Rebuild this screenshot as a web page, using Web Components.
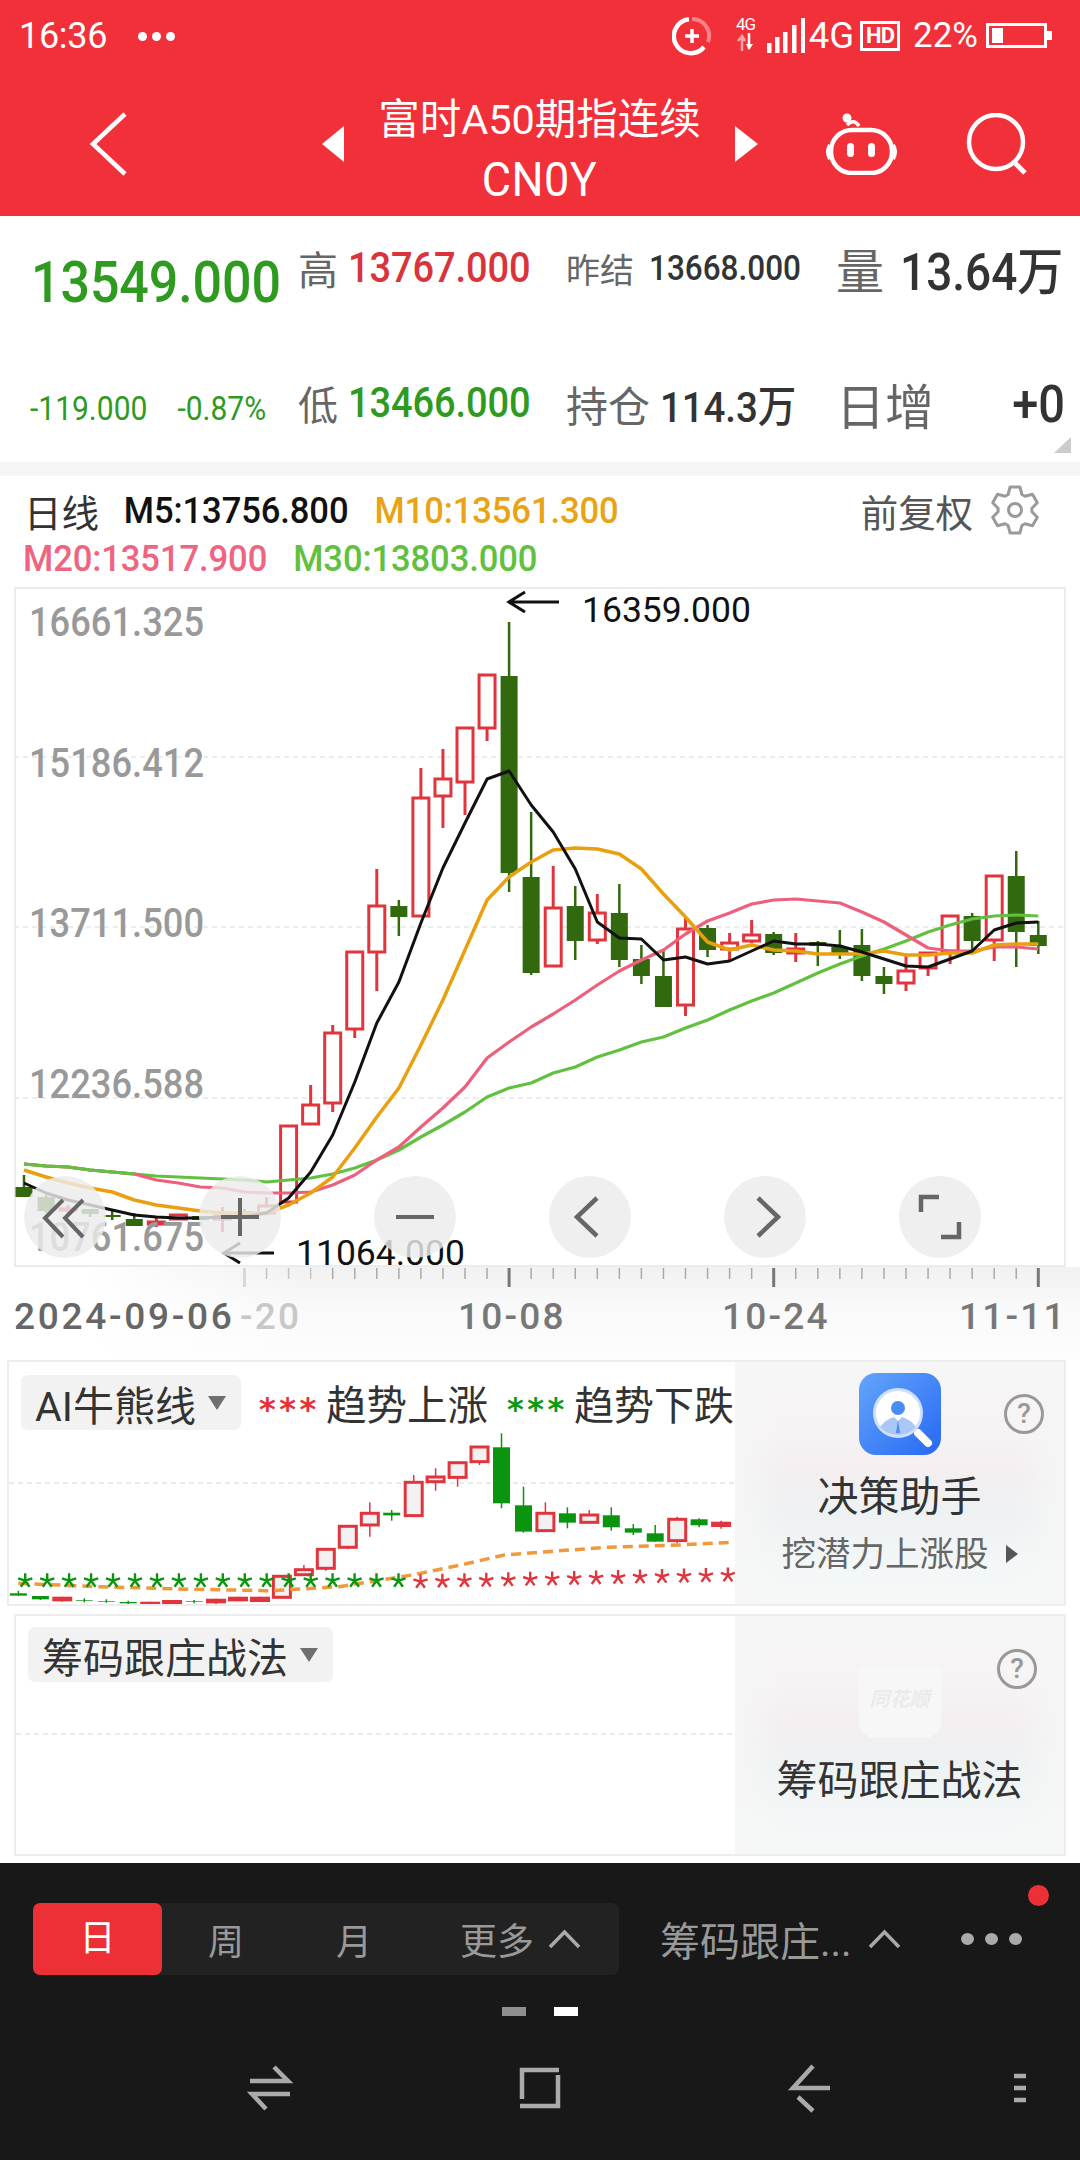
<!DOCTYPE html>
<html lang="zh">
<head>
<meta charset="utf-8">
<title>CN0Y</title>
<style>
  html, body { margin: 0; padding: 0; background: #fff; }
  body { font-family: Roboto, "Noto Sans CJK SC", sans-serif; width: 1080px; height: 2160px; overflow: hidden; }
  app-shell { width: 1080px; }
</style>
</head>
<body>
<app-shell>
  <status-bar></status-bar>
  <nav-header></nav-header>
  <quote-summary></quote-summary>
  <kline-legend></kline-legend>
  <kline-chart></kline-chart>
  <date-axis></date-axis>
  <signal-panel label="AI牛熊线" legend style="--panel-left:7px; --chip-left:12px;">
    <mini-kline slot="chart"></mini-kline>
    <advisor-card slot="side" title="决策助手" sub="挖潜力上涨股" style="--pad-top:11px; --help-right:20px; --help-top:32px; --icon-h:82px; --title-gap:14px;">
      <svg slot="icon" width="82" height="82" viewBox="0 0 82 82">
        <defs>
          <linearGradient id="blue" x1="0" y1="0" x2="1" y2="1">
            <stop offset="0" stop-color="#64a5fb"/><stop offset="1" stop-color="#2768f4"/>
          </linearGradient>
        </defs>
        <rect width="82" height="82" rx="17" fill="url(#blue)"/>
        <path d="M59 60 L69 70" stroke="#fff" stroke-width="8" stroke-linecap="round"/>
        <circle cx="39" cy="40" r="23.5" fill="#fff" stroke="#cfe0fa" stroke-width="3"/>
        <circle cx="39" cy="35" r="7" fill="#4a8cf5"/>
        <path d="M21 54 Q27 46 35 44 L39 48 L43 44 Q51 46 57 54 Q49 62 39 62 Q29 62 21 54Z" fill="#a9c8f5"/>
        <path d="M39 47 L41 60 H37Z" fill="#4a8cf5"/>
      </svg>
    </advisor-card>
  </signal-panel>
  <signal-panel label="筹码跟庄战法" style="--panel-left:14px; --chip-left:12px; --panel-gap:8px; --panel-h:242px; --chip-pad:15px;">
    <svg slot="chart" width="721" height="238" viewBox="16 1616 721 238">
      <line x1="16" x2="737" y1="1734" y2="1734" stroke="#e4e4e4" stroke-width="1.5" stroke-dasharray="5 4"/>
    </svg>
    <advisor-card slot="side" title="筹码跟庄战法" style="--pad-top:51px; --help-right:27px; --help-top:33px; --icon-h:71px; --title-gap:15px;">
      <ghost-logo slot="icon">同花顺</ghost-logo>
    </advisor-card>
  </signal-panel>
  <period-bar></period-bar>
</app-shell>

<script>
// small helper, every element just sets its shadow html
const mount = (el, html) => {
    el.attachShadow({mode: 'open'}).innerHTML = html;
};

const FONT = 'Roboto, "Noto Sans CJK SC", sans-serif';
const RED = '#e0353c';
const DARK_GREEN = '#32690f';
const BAR_RED = '#f2303a';

class AppShell extends HTMLElement {
    constructor(){
        super();
        mount(this, `<style>:host{display:flex;flex-direction:column;width:1080px;height:2160px;font-family:${FONT};}</style><slot></slot>`);
    }
}

class StatusBar extends HTMLElement {
    constructor(){
        super();
        mount(this, `
        <style>
          :host { display:flex; align-items:center; height:60px; padding:12px 28px 0 19px; box-sizing:border-box; background:${BAR_RED}; color:#fff; margin-bottom:0; }
          .time { font-size:36px; line-height:48px; letter-spacing:-.3px; }
          .dots { display:flex; gap:5px; margin-left:31px; }
          .dots i { width:9px; height:9px; border-radius:50%; background:#fff; }
          .right { margin-left:auto; display:flex; align-items:center; }
          .four { font-size:36.5px; line-height:40px; margin-left:4px; }
          .pct { font-size:35px; line-height:40px; margin-left:13px; }
          svg { display:block; }
          .hd { width:40px; height:30px; margin-left:6px; box-sizing:border-box; border:3px solid #fff; font-size:22px; line-height:23px; font-weight:700; text-align:center; letter-spacing:-1px; }
          .small { margin-left:23px; width:22px; height:40px; display:flex; flex-direction:column; align-items:center; }
          .small b { font-size:17px; line-height:16px; font-weight:400; letter-spacing:-1px; }
        </style>
        <span class="time">16:36</span>
        <span class="dots"><i></i><i></i><i></i></span>
        <div class="right">
          <svg width="40" height="40" viewBox="0 0 40 40">
            <path d="M20 3 A17 17 0 0 1 36 26" fill="none" stroke="#fff" stroke-opacity=".4" stroke-width="4"/>
            <path d="M32 31 A17 17 0 1 1 17 3.3" fill="none" stroke="#fff" stroke-width="4.5"/>
            <path d="M20 13 V27 M13 20 H27" stroke="#fff" stroke-width="3.5"/>
          </svg>
          <div class="small"><b>4G</b>
            <svg width="18" height="20" viewBox="0 0 18 20"><path d="M5 19 V5 M1 9 L5 4 L8 9" fill="none" stroke="#fff" stroke-opacity=".55" stroke-width="2.5"/><path d="M12 1 V17" stroke="#fff" stroke-width="2.5"/><path d="M9 12 H16 L12 18Z" fill="#fff"/></svg>
          </div>
          <svg style="margin-left:10px" width="38" height="36" viewBox="767 18 38 36" fill="#fff">
            <rect x="767" y="43" width="4.5" height="10"/><rect x="775" y="37" width="4.5" height="16"/><rect x="783" y="32" width="4.5" height="21"/><rect x="792" y="25" width="4.5" height="28"/><rect x="801" y="18" width="4" height="35"/>
          </svg>
          <span class="four">4G</span>
          <span class="hd">HD</span>
          <span class="pct">22%</span>
          <svg style="margin-left:8px" width="66" height="26" viewBox="0 0 66 26">
            <rect x="1.5" y="1.5" width="58" height="22" fill="none" stroke="#fff" stroke-width="3"/>
            <rect x="6" y="5" width="11" height="15" fill="#fff"/>
            <rect x="61" y="8" width="5" height="9" fill="#fff"/>
          </svg>
        </div>`);
    }
}

class NavHeader extends HTMLElement {
    constructor(){
        super();
        mount(this, `
        <style>
          :host { display:flex; align-items:center; height:156px; padding:12px 0 0 88px; box-sizing:border-box; background:${BAR_RED}; color:#fff; }
          svg { display:block; flex:none; }
          .title { width:391px; flex:none; text-align:center; margin-top:12px; }
          .title div { font-size:41.5px; line-height:60px; white-space:nowrap; }
          .title div + div { font-size:45px; letter-spacing:.5px; transform:scaleY(1.08); }
        </style>
        <svg width="40" height="64" viewBox="0 0 40 64"><path d="M37 2 L5 32 L37 62" fill="none" stroke="#fff" stroke-width="4.5"/></svg>
        <svg style="margin-left:194px" width="22" height="36" viewBox="0 0 22 36"><path d="M22 0 V36 L0 18Z" fill="#fff"/></svg>
        <div class="title"><div>富时A50期指连续</div><div>CN0Y</div></div>
        <svg width="23" height="36" viewBox="0 0 23 36"><path d="M0 0 V36 L23 18Z" fill="#fff"/></svg>
        <svg style="margin-left:68px" width="71" height="62" viewBox="0 0 71 62">
          <path d="M20 8 Q27 1 32 9" transform="translate(1,4)" fill="none" stroke="#fff" stroke-width="3.5"/>
          <circle cx="21" cy="5" r="4.5" fill="#fff"/>
          <rect x="5" y="17" width="61" height="43" rx="21" fill="none" stroke="#fff" stroke-width="4.5"/>
          <path d="M4 32 Q0 38 4 46 M67 32 Q71 38 67 46" fill="none" stroke="#fff" stroke-width="4"/>
          <rect x="21" y="30" width="7" height="14" rx="3.5" fill="#fff"/>
          <rect x="42" y="30" width="7" height="14" rx="3.5" fill="#fff"/>
        </svg>
        <svg style="margin-left:69px" width="64" height="62" viewBox="0 0 64 62">
          <circle cx="30" cy="29" r="27" fill="none" stroke="#fff" stroke-width="4.5"/>
          <path d="M48 49 L59 60" stroke="#fff" stroke-width="5"/>
        </svg>`);
    }
}

class QuoteSummary extends HTMLElement {
    constructor(){
        super();
        mount(this, `
        <style>
          :host { display:grid; grid-template-columns:268px 268px 270px 1fr; grid-template-rows:80px 80px; row-gap:55px; padding:12px 15px 19px 30px; box-sizing:border-box; height:246px; background:#fff; position:relative; color:#333; }
          .cell { display:flex; align-items:center; white-space:nowrap; }
          .g { color:#2e9a1f; } .r { color:#d9343c; }
          .tall { transform:scaleY(1.11); }
          .price { font-size:52px; font-weight:500; margin:28px 0 0 1px; letter-spacing:-.1px; }
          .chg { font-size:30px; margin-top:10px; }
          .lbl { color:#666; }
          .l40 { font-size:40px; margin-right:10px; }
          .v38 { font-size:38px; font-weight:500; letter-spacing:-.1px; }
          .v34 { font-size:31.5px; font-weight:500; }
          .col4 { justify-content:space-between; }
          .big { font-size:47px; font-weight:500; white-space:nowrap; }
          .corner { position:absolute; right:9px; bottom:9px; width:0; height:0; border-left:17px solid transparent; border-bottom:16px solid #ccc; }
        </style>
        <div class="cell"><span class="price g tall">13549.000</span></div>
        <div class="cell"><span class="lbl l40">高</span><span class="v38 r tall">13767.000</span></div>
        <div class="cell"><span class="lbl" style="font-size:34px;margin-right:15px">昨结</span><span class="v34 tall">13668.000</span></div>
        <div class="cell"><span class="lbl" style="font-size:48px;margin-right:16px">量</span><span class="big tall" style="font-size:46px">13.64万</span></div>
        <div class="cell chg g"><span class="tall">-119.000</span><span class="tall" style="margin-left:30px">-0.87%</span></div>
        <div class="cell"><span class="lbl l40">低</span><span class="v38 g tall">13466.000</span></div>
        <div class="cell"><span class="lbl" style="font-size:42px;margin-right:10px">持仓</span><span class="v38 tall" style="font-size:38.5px">114.3万</span></div>
        <div class="cell col4"><span class="lbl" style="font-size:49px">日增</span><span class="big tall">+0</span></div>
        <span class="corner"></span>`);
    }
}

// six tooth outline for the settings icon
const gearPoints = (c, outer, inner) => {
    let pts = [];
    for(let k = 0; k < 6; k++){
        let base = -90 + 60 * k;
        [[-24, inner], [-12, outer], [12, outer], [24, inner]].forEach(([d, r]) => {
            let a = (base + d) * Math.PI / 180;
            pts.push(`${(c + r * Math.cos(a)).toFixed(1)},${(c + r * Math.sin(a)).toFixed(1)}`);
        });
    }
    return pts.join(' ');
};

class KlineLegend extends HTMLElement {
    constructor(){
        super();
        mount(this, `
        <style>
          :host { display:block; height:125px; border-top:14px solid #f5f5f5; box-sizing:border-box; padding:10px 40px 0 0; background:#fff; }
          .row { display:flex; align-items:center; height:48px; white-space:nowrap; font-size:34.6px; font-weight:500; letter-spacing:-.1px; }
          .row > .n { transform:scaleY(1.09); }
          .r1 { padding-left:24px; } .r2 { padding-left:23px; }
          .cn { font-size:37.5px; font-weight:400; color:#333; margin-right:25px; }
          .right { margin-left:auto; display:flex; align-items:center; gap:17px; color:#555; font-size:37.5px; font-weight:400; }
          svg { display:block; }
        </style>
        <div class="row r1">
          <span class="cn">日线</span>
          <span class="n" style="color:#111">M5:13756.800</span>
          <span class="n" style="color:#e8a317;margin-left:26px">M10:13561.300</span>
          <span class="right">前复权
            <svg width="50" height="50" viewBox="0 0 50 50"><polygon points="${gearPoints(25, 23.5, 17)}" fill="none" stroke="#9a9a9a" stroke-width="3" stroke-linejoin="round"/><circle cx="25" cy="25" r="6.5" fill="none" stroke="#9a9a9a" stroke-width="3"/></svg>
          </span>
        </div>
        <div class="row r2">
          <span class="n" style="color:#ef6480">M20:13517.900</span>
          <span class="n" style="color:#62c040;margin-left:26px">M30:13803.000</span>
        </div>`);
    }
}

// [type, bodyTop, bodyBottom, wickTop, wickBottom] in page pixels
const CANDLES = [
    ['g',1187,1197,1175,1197],['g',1197,1211,1195,1213],['r',1208,1211,1205,1215],['g',1209,1214,1209,1217],
    ['g',1215,1217,1211,1220],['g',1219,1226,1213,1226],['r',1221,1225,1218,1227],['r',1214,1220,1214,1220],
    ['g',1216,1220,1216,1220],['r',1215,1220,1207,1232],['g',1211,1218,1209,1219],['r',1205,1214,1197,1214],
    ['r',1125,1203,1125,1203],['r',1104,1125,1085,1125],['r',1032,1104,1025,1112],['r',951,1030,951,1038],
    ['r',905,953,869,991],['g',906,917,900,936],['r',797,917,768,917],['r',778,797,749,828],
    ['r',727,783,727,815],['r',674,729,674,741],['g',676,873,622,892],['g',877,973,812,975],
    ['r',907,967,866,967],['g',906,941,886,960],['r',912,941,894,944],['g',913,960,884,967],
    ['g',959,976,945,984],['g',976,1007,951,1007],['r',928,1006,917,1016],['g',928,950,925,957],
    ['r',942,950,933,960],['r',934,942,920,943],['g',934,953,932,955],['r',948,954,933,962],
    ['g',942,946,941,966],['g',947,953,930,959],['g',945,976,929,981],['g',976,984,967,994],
    ['r',970,984,955,991],['r',952,969,952,976],['r',915,952,915,964],['g',916,941,913,950],
    ['r',875,941,875,961],['g',876,932,851,967],['g',935,946,921,954]
];
const MA5 = [1183,1193,1200,1205,1210,1215,1217,1218,1218,1217,1217,1213,1198,1172,1135,1082,1023,982,923,868,823,779,771,805,832,869,922,938,939,960,957,964,961,951,941,944,944,946,952,959,966,967,959,951,930,923,922];
const MA10 = [1170,1177,1183,1188,1192,1200,1205,1208,1211,1213,1213,1213,1205,1193,1177,1148,1117,1088,1045,1000,950,900,877,862,850,848,849,854,869,894,917,942,950,945,950,951,954,954,954,951,955,955,953,953,945,944,944];
const MA20 = [1164,1166,1167,1170,1172,1174,1180,1183,1187,1188,1192,1193,1193,1192,1185,1175,1160,1147,1127,1108,1087,1058,1042,1027,1014,1000,985,971,960,950,934,921,913,904,900,899,901,903,912,922,935,948,951,951,947,947,949];
const MA30 = [1164,1166,1167,1170,1172,1174,1176,1177,1178,1179,1180,1182,1180,1178,1174,1168,1160,1150,1137,1125,1112,1097,1088,1083,1073,1067,1057,1050,1042,1037,1028,1020,1010,1001,993,983,973,964,956,949,941,932,925,919,916,915,916];

const candleX = (i) => 24 + 22.05 * i;

const maLine = (values, color, width) => {
    let pts = values.map((y, i) => `${candleX(i).toFixed(1)},${y}`).join(' ');
    return `<polyline points="${pts}" fill="none" stroke="${color}" stroke-width="${width}" stroke-linejoin="round"/>`;
};

class KlineChart extends HTMLElement {
    constructor(){
        super();
        let candles = CANDLES.map((c, i) => {
            let [type, top, bottom, wickTop, wickBottom] = c;
            let x = candleX(i);
            if(type === 'r'){
                return `<path d="M${x} ${wickTop}V${top}M${x} ${bottom}V${wickBottom}" stroke="${RED}" stroke-width="3"/>` +
                    `<rect x="${x - 8}" y="${top + 1}" width="16" height="${Math.max(bottom - top - 2, 1)}" fill="#fff" stroke="${RED}" stroke-width="3"/>`;
            }
            return `<path d="M${x} ${wickTop}V${wickBottom}" stroke="${DARK_GREEN}" stroke-width="2.5"/>` +
                `<rect x="${x - 8.5}" y="${top}" width="17" height="${bottom - top}" fill="${DARK_GREEN}"/>`;
        }).join('');
        let grid = [757, 927, 1098].map(y => `<line x1="14" x2="1066" y1="${y}" y2="${y}" stroke="#e6e6e6" stroke-width="1.5" stroke-dasharray="5 4"/>`).join('');
        let axis = [[621,'16661.325'],[762,'15186.412'],[922,'13711.500'],[1083,'12236.588'],[1236,'10761.675']]
            .map(([y, t]) => `<text x="29" y="${y + 13}" class="axis">${t}</text>`).join('');
        let buttons = [
            '<path d="M39 24 L21 42 L39 61 M59 24 L41 42 L59 61" fill="none" stroke="#666" stroke-width="4"/>',
            '<path d="M41 22 V60 M22 41 H60" stroke="#666" stroke-width="4"/>',
            '<path d="M22 41 H60" stroke="#666" stroke-width="4"/>',
            '<path d="M48 22 L28 41 L48 60" fill="none" stroke="#666" stroke-width="4.5"/>',
            '<path d="M34 22 L54 41 L34 60" fill="none" stroke="#666" stroke-width="4.5"/>',
            '<path d="M22 36 V21 H40 M60 46 V61 H42" fill="none" stroke="#666" stroke-width="4.5"/>'
        ].map(b => `<svg width="82" height="82" viewBox="0 0 82 82">${b}</svg>`).join('');
        mount(this, `
        <style>
          :host { display:block; position:relative; width:1052px; height:680px; margin-left:14px; box-sizing:border-box; background:#fff; flex:none; }
          svg.main { position:absolute; left:0; top:0; display:block; overflow:visible; }
          .axis { font:500 36.3px ${FONT}; fill:#999; transform-box:fill-box; transform-origin:center; transform:scaleY(1.12); }
          .note { font:35.5px ${FONT}; fill:#111; }
          .btns { position:absolute; left:10px; top:589px; display:flex; gap:93px; }
          .btns svg { display:block; border-radius:50%; background:rgba(236,236,236,.82); }
        </style>
        <svg class="main" width="1052" height="680" viewBox="14 587 1052 680">
          <rect x="15" y="588" width="1050" height="678" fill="none" stroke="#ececec" stroke-width="2"/>
          ${grid}
          ${candles}
          ${maLine(MA30, '#62c040', 3.2)}
          ${maLine(MA20, '#ee5f7c', 3.2)}
          ${maLine(MA30.slice(0, 6), '#62c040', 3.2)}
          ${maLine(MA10, '#e8a010', 3.5)}
          ${maLine(MA5, '#111', 3)}
          ${axis}
          <path d="M559 602 H510 M525 592 L509 602 L525 612" fill="none" stroke="#111" stroke-width="3"/>
          <text x="582" y="622" class="note">16359.000</text>
          <path d="M274 1253 H224 M240 1243 L224 1253 L240 1263" fill="none" stroke="#111" stroke-width="3"/>
          <text x="296" y="1265" class="note">11064.000</text>
        </svg>
        <div class="btns">${buttons}</div>`);
    }
}

class DateAxis extends HTMLElement {
    constructor(){
        super();
        let ticks = '';
        for(let i = 10; i < 47; i++){
            let big = (i === 22 || i === 34 || i === 46);
            let x = candleX(i);
            // the ticks next to the fade on the left are lighter
            let color = i === 10 ? '#d8d8d8' : (big ? '#777' : (i < 14 ? '#c4c4c4' : '#aaa'));
            ticks += `<line x1="${x}" x2="${x}" y1="1268" y2="${(big || i === 10) ? 1287 : 1279}" stroke="${color}" stroke-width="${(big || i === 10) ? 3 : 1.5}"/>`;
        }
        mount(this, `
        <style>
          :host { display:block; height:93px; flex:none;
            background:linear-gradient(90deg,#fff 8%,rgba(255,255,255,0) 28%),linear-gradient(180deg,#f1f1f1 0,#f9f9f9 40%,#fdfdfd 100%); }
          svg { display:block; }
          text { font:500 37px ${FONT}; fill:#777; letter-spacing:2.2px; }
        </style>
        <svg width="1080" height="88" viewBox="0 1267 1080 88">
          ${ticks}
          <text x="14" y="1329" style="fill:#666;letter-spacing:2.7px">2024-09-06</text>
          <text x="240" y="1329" style="fill:#c8c8c8">-20</text>
          <text x="458" y="1329">10-08</text>
          <text x="722" y="1329">10-24</text>
          <text x="959" y="1329">11-11</text>
        </svg>`);
    }
}

class SignalPanel extends HTMLElement {
    constructor(){
        super();
        let label = this.getAttribute('label');
        let legend = this.hasAttribute('legend') ? `
          <span class="stars" style="color:#ec2f36">***</span><span class="txt">趋势上涨</span>
          <span class="stars" style="color:#0a9a10;margin-left:19px">***</span><span class="txt" style="font-size:40px">趋势下跌</span>` : '';
        mount(this, `
        <style>
          :host { display:flex; flex:none; height:var(--panel-h, 246px); margin:var(--panel-gap, 0) 14px 0 var(--panel-left, 7px); box-sizing:border-box; border:2px solid #ededed; background:#fff; }
          .main { position:relative; flex:1; min-width:0; overflow:hidden; }
          .head { position:relative; display:flex; align-items:center; margin:11px 0 0 var(--chip-left); white-space:nowrap; color:#333; font-size:41px; width:712px; }
          .chip { display:flex; align-items:center; height:55px; padding:0 var(--chip-pad, 15px) 0 14px; border-radius:7px; background:#f2f2f2; }
          .chip i { width:0; height:0; margin-left:12px; border:9px solid transparent; border-top:14px solid #6f6f6f; border-bottom:0; }
          .stars { flex:0 0 58px; font:700 32px "DejaVu Sans", sans-serif; letter-spacing:3.6px; margin-left:18px; position:relative; top:6px; line-height:40px; }
          .txt { font-size:40.5px; }
          .stars + .txt { margin-left:6px; }
          ::slotted([slot=chart]) { position:absolute; left:0; top:0; display:block; }
          .side { flex:none; width:329px; }
        </style>
        <div class="main">
          <slot name="chart"></slot>
          <div class="head"><span class="chip">${label}<i></i></span>${legend}</div>
        </div>
        <div class="side"><slot name="side"></slot></div>`);
    }
}

class MiniKline extends HTMLElement {
    constructor(){
        super();
        // [type, bodyTop, bodyBottom, wickTop, wickBottom] read off the panel, in 2.063x / 3x crop units
        const c = [
            ['g',760,767,752,767],['g',768,778,768,780],['s',770,784,770,785],['g',780,782,775,787],['g',783,785,778,788],
            ['g',786,790,782,792],['s',785,796,785,796],['s',780,792,780,792],['g',784,786,780,790],['s',776,790,776,797],
            ['s',770,784,770,784],['s',770,786,770,786],['r',706,775,706,775],['r',686,707,675,707],['r',625,688,625,692],
            ['r',556,625,556,628],['r',517,558,487,590],['g',518,526,510,542],['r',424,530,405,530],['r',408,428,385,452],
            ['r',365,415,365,440],['r',318,368,318,375],['g',322,490,280,505],['g',496,575,440,578],['r',517,575,487,575],
            ['g',520,548,502,565],['r',522,550,510,550],['g',526,562,502,572],['g',565,578,552,585],['g',580,605,555,605],
            ['r',535,605,530,610],['g',538,556,535,562],['s',545,561,542,566]
        ];
        const fx = (zx) => +(zx / 2.063).toFixed(1);
        const fy = (zy) => +(1340 + zy / 3).toFixed(1);
        let body = c.map((d, i) => {
            let [type, t, b, wt, wb] = d;
            let x = fx(38 + 45.3 * i);
            if(type === 'r'){
                return `<path d="M${x} ${fy(wt)}V${fy(wb)}" stroke="${RED}" stroke-width="1.5"/>` +
                    `<rect x="${x - 8.5}" y="${fy(t) + 1}" width="17" height="${(b - t) / 3 - 2}" fill="#f4f1f2" stroke="${RED}" stroke-width="3"/>`;
            }
            let color = type === 'g' ? '#0a9410' : RED;
            return `<path d="M${x} ${fy(wt)}V${fy(wb)}" stroke="${color}" stroke-width="1.5"/>` +
                `<rect x="${x - (type === 's' ? 10 : 8.5)}" y="${fy(t)}" width="${type === 's' ? 20 : 17}" height="${(b - t) / 3}" fill="${color}"/>`;
        }).join('');
        const trend = [[38,730],[200,740],[400,748],[560,752],[700,740],[850,705],[950,675],[1040,645],[1130,635],[1250,622],[1400,615],[1510,607]];
        let stars = '';
        for(let i = 0; i < 33; i++){
            let x = fx(52 + 45.3 * i);
            let down = i < 18;
            let y = fy(down ? 722 : 725 - (i - 18) * 1.4);
            let color = down ? '#0a9410' : RED;
            // five thin arms, like the skinny star the app draws
            let arms = '';
            for(let k = 0; k < 5; k++){
                let a = (-90 + k * 72) * Math.PI / 180;
                arms += `M${x} ${y}L${(x + 7.5 * Math.cos(a)).toFixed(1)} ${(y + 7.5 * Math.sin(a)).toFixed(1)}`;
            }
            stars += `<path d="${arms}" stroke="${color}" stroke-width="2.4" fill="none"/>`;
        }
        mount(this, `
        <style>:host{display:block;width:726px;height:242px;} svg{display:block;}</style>
        <svg width="726" height="242" viewBox="9 1362 726 242">
          <line x1="9" x2="735" y1="1483" y2="1483" stroke="#e4e4e4" stroke-width="1.5" stroke-dasharray="5 4"/>
          ${body}
          <polyline points="${trend.map(p => `${fx(p[0])},${fy(p[1])}`).join(' ')}" fill="none" stroke="#f0983c" stroke-width="3.5" stroke-dasharray="10 6"/>
          ${stars}
        </svg>`);
    }
}

class AdvisorCard extends HTMLElement {
    constructor(){
        super();
        let sub = this.getAttribute('sub');
        let subLine = sub ? `<div class="sub">${sub}<i></i></div>` : '';
        mount(this, `
        <style>
          :host { display:flex; flex-direction:column; align-items:center; position:relative; height:100%; box-sizing:border-box; padding-top:var(--pad-top);
            background:linear-gradient(90deg,#f6f6f6 0,rgba(246,246,246,0) 16%,rgba(246,246,246,0) 84%,#f6f6f6 100%),
              linear-gradient(180deg,#f6f6f6 0,#f6f3f4 30%,#f4eef0 45%,#edf1f2 62%,#f4f7f7 85%,#f6f7f7 100%); }
          .icon { height:var(--icon-h); }
          .title { font-size:41px; line-height:56px; color:#333; margin-top:var(--title-gap); white-space:nowrap; }
          .sub { display:flex; align-items:center; font-size:34.5px; line-height:48px; color:#666; margin-top:5px; white-space:nowrap; }
          .sub i { width:0; height:0; margin-left:17px; border:9px solid transparent; border-left:12px solid #555; border-right:0; }
          .help { position:absolute; right:var(--help-right); top:var(--help-top); width:40px; height:40px; box-sizing:border-box; border:3px solid #999; border-radius:50%; color:#999; font-size:28px; line-height:34px; text-align:center; font-weight:500; }
        </style>
        <div class="help">?</div>
        <div class="icon"><slot name="icon"></slot></div>
        <div class="title">${this.getAttribute('title')}</div>
        ${subLine}`);
    }
}

class GhostLogo extends HTMLElement {
    constructor(){
        super();
        mount(this, `
        <style>
          :host { display:flex; align-items:center; justify-content:center; width:82px; height:71px; border-radius:0 0 16px 16px; background:#f7f7f7; color:#ebebeb; font-size:20px; font-weight:700; font-style:italic; padding-bottom:10px; box-sizing:border-box; }
        </style><slot></slot>`);
    }
}

class PeriodBar extends HTMLElement {
    constructor(){
        super();
        const chevron = `<svg width="33" height="20" viewBox="0 0 33 20"><path d="M2 18 L16.5 3 L31 18" fill="none" stroke="#aaa" stroke-width="3.5"/></svg>`;
        mount(this, `
        <style>
          :host { display:block; position:relative; flex:none; height:297px; margin-top:7px; padding-top:40px; box-sizing:border-box; background:#181818; color:#999; }
          svg { display:block; }
          .row { display:flex; align-items:center; padding-left:33px; white-space:nowrap; }
          .tabs { display:flex; align-items:center; width:586px; height:72px; background:#222; border-radius:7px; font-size:36px; flex:none; }
          .tab { width:128px; text-align:center; }
          .on { width:129px; height:72px; line-height:72px; background:#ec3035; color:#fff; border-radius:7px; }
          .more { display:flex; align-items:center; gap:14px; margin-left:42px; font-size:37px; }
          .sel { display:flex; align-items:center; margin-left:41px; font-size:40px; }
          .sel svg { margin-left:16px; }
          .dots { display:flex; gap:11px; margin-left:60px; }
          .dots i { width:13px; height:12px; border-radius:50%; background:#aaa; }
          .badge { position:absolute; left:1028px; top:22px; width:21px; height:21px; border-radius:50%; background:#ec3035; }
          .pager { display:flex; justify-content:center; gap:28px; margin-top:32px; }
          .pager i { width:24px; height:9px; background:#8f8f8f; }
          .pager i + i { background:#fff; }
          .keys { margin-top:44px; }
        </style>
        <div class="row">
          <div class="tabs">
            <span class="tab on">日</span><span class="tab">周</span><span class="tab">月</span>
            <span class="more">更多${chevron}</span>
          </div>
          <span class="sel">筹码跟庄...${chevron}</span>
          <span class="dots"><i></i><i></i><i></i></span>
        </div>
        <span class="badge"></span>
        <div class="pager"><i></i><i></i></div>
        <svg class="keys" width="1080" height="60" viewBox="0 2060 1080 60" fill="none" stroke="#aaa" stroke-width="4">
          <path d="M274 2067 L288 2081 H250 M290 2094 H252 L266 2109" stroke-width="4.5"/>
          <path d="M522 2099 V2070 H559 M558 2075 V2106 H520" stroke-width="4.5"/>
          <path d="M813 2066 L793 2088 H830 M798 2097 L813 2111" stroke-width="4.5"/>
          <path d="M1014 2076 H1026 M1014 2088 H1026 M1014 2100 H1026" stroke-width="4.5"/>
        </svg>`);
    }
}

customElements.define('app-shell', AppShell);
customElements.define('status-bar', StatusBar);
customElements.define('nav-header', NavHeader);
customElements.define('quote-summary', QuoteSummary);
customElements.define('kline-legend', KlineLegend);
customElements.define('kline-chart', KlineChart);
customElements.define('date-axis', DateAxis);
customElements.define('signal-panel', SignalPanel);
customElements.define('mini-kline', MiniKline);
customElements.define('advisor-card', AdvisorCard);
customElements.define('ghost-logo', GhostLogo);
customElements.define('period-bar', PeriodBar);
</script>
</body>
</html>
